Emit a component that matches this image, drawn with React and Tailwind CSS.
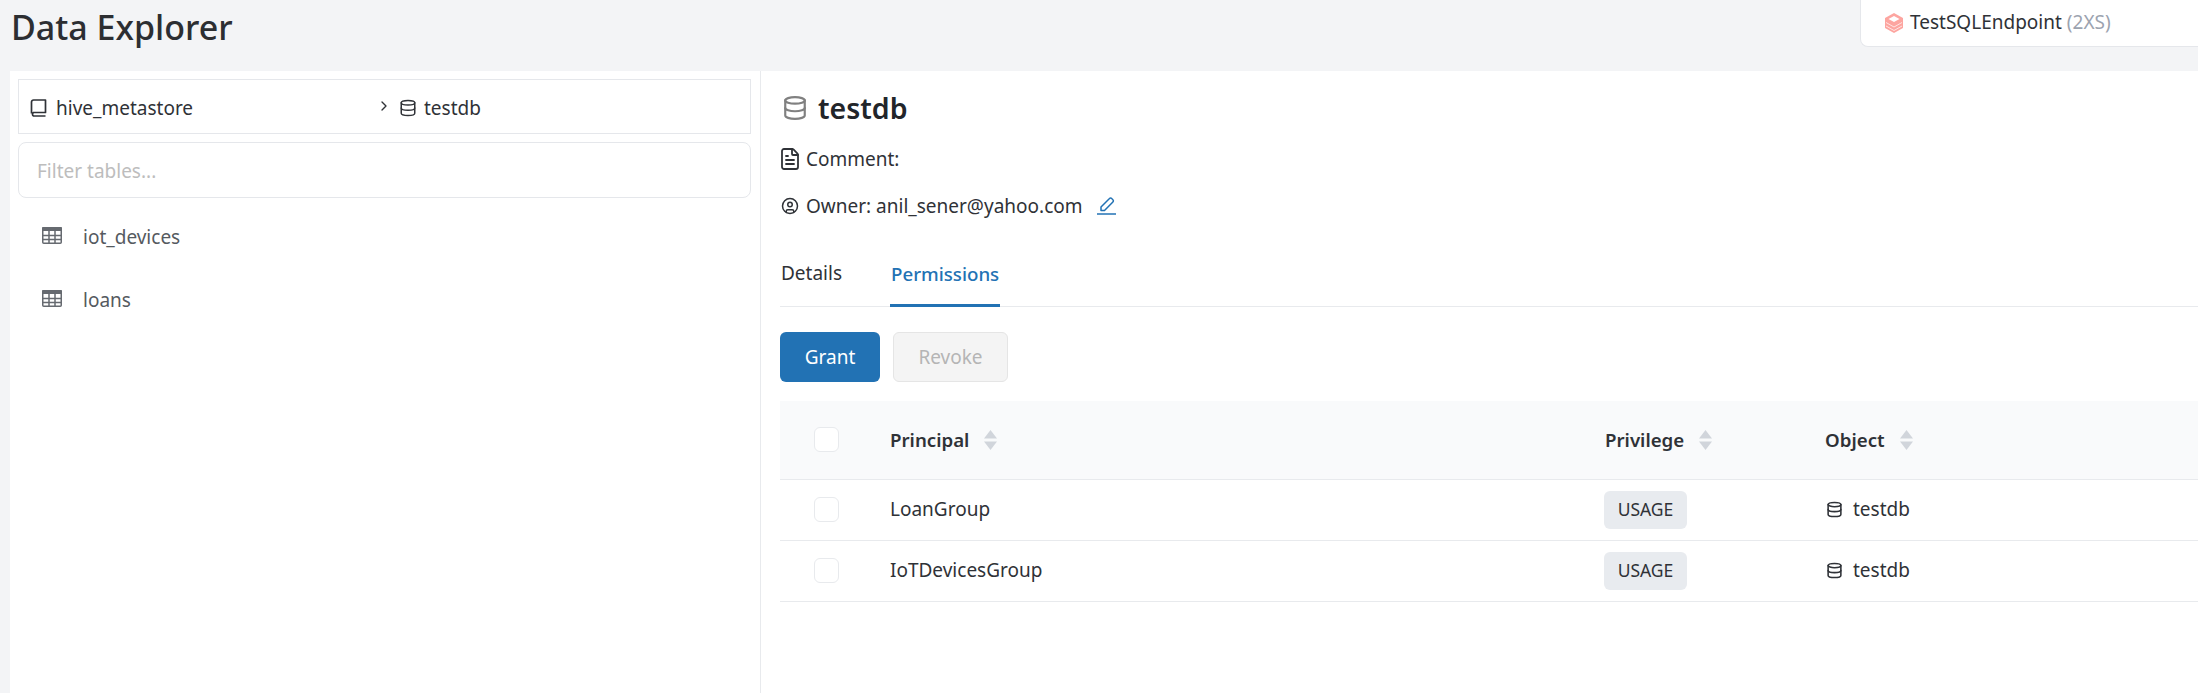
import { ChevronRight, Database, FileText, CircleUser } from 'lucide-react';

const BookIcon = () => (
    <svg width="17" height="18" viewBox="0 0 17 18" fill="none" stroke="currentColor" strokeWidth="1.7" className="shrink-0">
        <path d="M1.500 14.500V3a2 2 0 0 1 2-2h12v12.500H3.500a2 2 0 0 0 0 3.500h12" strokeLinejoin="round" />
    </svg>
);

const TableIcon = () => (
    <svg width="20" height="17" viewBox="0 0 20 17" className="shrink-0 mb-[4px]" fill="none" stroke="#666a70">
        <rect x="0.750" y="0.750" width="18.500" height="15.500" rx="1" strokeWidth="1.500" />
        <rect x="0" y="0" width="20" height="4" rx="1" fill="#666a70" stroke="none" />
        <path d="M7 1v15M13 1v15M1 8.500h18M1 12.500h18" strokeWidth="1.500" />
    </svg>
);

const SortIcon = () => (
    <svg width="13" height="20" viewBox="0 0 13 20" className="shrink-0">
        <path d="M6.500 0 13 8.500H0z" fill="#d1d5db" />
        <path d="M0 11.500h13L6.500 20z" fill="#d1d5db" />
    </svg>
);

const StackIcon = () => (
    <svg width="18" height="20" viewBox="0 0 18 20" className="shrink-0">
        <path d="M9 0 18 5v10l-9 5-9-5V5z" fill="#fda5a0" />
        <path d="M9 3 14.500 6 9 9 3.500 6z" fill="#fff" />
        <path d="M1 9.500 9 14l8-4.500M1 13 9 17.500l8-4.500" fill="none" stroke="#fff" strokeOpacity="0.700" strokeWidth="1" />
    </svg>
);

const EditIcon = () => (
    <svg width="19" height="18" viewBox="0 0 19 18" fill="none" stroke="#2272b4" strokeWidth="1.500" className="shrink-0 ml-[7px]">
        <path d="M4 13.500V10l8.500-8.500a1.500 1.500 0 0 1 2.200 0l1.200 1.200a1.500 1.500 0 0 1 0 2.200L7.500 13.500z" strokeLinejoin="round" />
        <path d="M0 17h19" />
    </svg>
);

const Checkbox = () => <span className="block w-[25px] h-[25px] rounded-md border border-[#e8eaed] bg-white" />;

const rows = ['LoanGroup', 'IoTDevicesGroup'];

export default function App() {
    return (
        <div className="font-['Noto_Sans','Liberation_Sans',sans-serif] text-[19px] h-[693px] bg-[#f3f4f6] text-[#2f3237] overflow-hidden">
            <header className="h-[71px] flex justify-between items-start">
                <h1 className="ml-[11px] mt-[3px] text-[34px] leading-[48px] font-medium text-[#2c2e32]">Data Explorer</h1>
                <div className="w-[338px] h-[48px] bg-white border-l border-b border-[#e5e7eb] rounded-bl-lg flex items-center pl-[24px] -mt-px">
                    <StackIcon />
                    <span className="ml-[7px]">TestSQLEndpoint</span>
                    <span className="ml-[5px] text-[#9ca3af]">(2XS)</span>
                </div>
            </header>

            <main className="ml-[10px] h-[622px] flex bg-white">
                <aside className="w-[751px] border-r border-[#e8eaed] pt-[8px] pl-[8px] pr-[9px]">
                    <div className="h-[55px] border border-[#e5e7eb] flex items-center pt-[3px]">
                        <div className="w-[357px] pl-[11px] flex items-center gap-[9px]">
                            <BookIcon />
                            <span>hive_metastore</span>
                        </div>
                        <ChevronRight size={16} strokeWidth={2} className="-mt-[4px]" />
                        <Database size={18} strokeWidth={2} className="ml-[7px]" />
                        <span className="ml-[7px]">testdb</span>
                    </div>
                    <div className="mt-[8px] h-[56px] border border-[#e5e7eb] rounded-lg flex items-center pl-[18px] pt-[2px] text-[#bdbdbd]">
                        Filter tables...
                    </div>
                    <ul className="mt-[8px] text-[#555a60]">
                        <li className="h-[63px] flex items-center pl-[24px] gap-[21px]"><TableIcon /><span>iot_devices</span></li>
                        <li className="h-[63px] flex items-center pl-[24px] gap-[21px]"><TableIcon /><span>loans</span></li>
                    </ul>
                </aside>

                <section className="flex-1 pl-[19px]">
                    <div className="flex items-center h-[28px] mt-[23px] ml-[2px] gap-[10px]">
                        <Database size={26} strokeWidth={2} className="text-[#808080]" />
                        <h2 className="text-[28.500px] font-semibold text-[#22252a]">testdb</h2>
                    </div>
                    <div className="mt-[25px] h-[24px] flex items-center gap-[4px] -ml-[2px]">
                        <FileText size={24} strokeWidth={1.800} />
                        <span>Comment:</span>
                    </div>
                    <div className="mt-[23px] h-[24px] flex items-center gap-[7px] ml-[1px]">
                        <CircleUser size={18} strokeWidth={2} />
                        <span>Owner: anil_sener@yahoo.com</span>
                        <EditIcon />
                    </div>
                    <nav className="mt-[22px] h-[67px] border-b border-[#e8eaed] flex items-end">
                        <a className="w-[110px] h-[53px] pl-[1px] pt-[6px]">Details</a>
                        <a className="h-[53px] w-[110px] pl-[1px] pt-[6px] text-[18.700px] font-medium text-[#2272b4] border-b-[3px] border-[#2272b4] -mb-px">Permissions</a>
                    </nav>
                    <div className="mt-[25px] flex gap-[13px]">
                        <button className="w-[100px] h-[50px] rounded-md bg-[#2272b4] text-white">Grant</button>
                        <button className="w-[115px] h-[50px] rounded-md bg-[#f4f4f4] border border-[#e5e5e5] text-[#b5b5b5]">Revoke</button>
                    </div>
                    <table className="mt-[19px] w-full table-fixed">
                        <colgroup>
                            <col className="w-[110px]" />
                            <col className="w-[715px]" />
                            <col className="w-[220px]" />
                            <col />
                        </colgroup>
                        <thead>
                            <tr className="h-[78px] bg-[#f9fafb] border-b border-[#e8eaed] text-left text-[18.700px]">
                                <th className="pl-[34px] font-normal"><Checkbox /></th>
                                <th className="font-semibold"><div className="flex items-center gap-[15px]">Principal <SortIcon /></div></th>
                                <th className="font-semibold"><div className="flex items-center gap-[15px]">Privilege <SortIcon /></div></th>
                                <th className="font-semibold"><div className="flex items-center gap-[15px]">Object <SortIcon /></div></th>
                            </tr>
                        </thead>
                        <tbody>
                            {rows.map((r) => (
                                <tr key={r} className="h-[61px] border-b border-[#e8eaed]">
                                    <td className="pl-[34px]"><Checkbox /></td>
                                    <td>{r}</td>
                                    <td><span className="inline-flex items-center justify-center w-[83px] h-[38px] -ml-px rounded-md bg-[#e8ebef] text-[17.500px] align-middle">USAGE</span></td>
                                    <td>
                                        <div className="flex items-center gap-[10px] ml-[1px]">
                                            <Database size={17} strokeWidth={2.200} />
                                            <span>testdb</span>
                                        </div>
                                    </td>
                                </tr>
                            ))}
                        </tbody>
                    </table>
                </section>
            </main>
        </div>
    );
}
